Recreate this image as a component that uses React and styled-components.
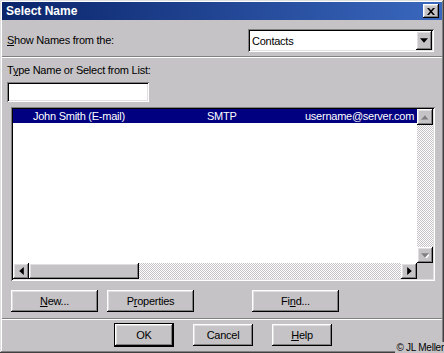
import React from 'react';
import styled, { createGlobalStyle, css } from 'styled-components';

const FACE = '#c6c3c6';

const Global = createGlobalStyle`
  html, body {
    margin: 0;
    padding: 0;
    background: ${FACE};
  }
  body {
    font-family: "Liberation Sans", Arial, sans-serif;
    font-size: 11px;
    letter-spacing: -0.25px;
    color: #000;
  }
`;

const raised = css`
  background: ${FACE};
  box-shadow: inset -1px -1px #000, inset 1px 1px #fff,
    inset -2px -2px #808080, inset 2px 2px #dfdfdf;
`;

const sunken = css`
  background: #fff;
  box-shadow: inset 1px 1px #808080, inset -1px -1px #fff,
    inset 2px 2px #000, inset -2px -2px #dfdfdf;
`;

const checker = css`
  background: repeating-conic-gradient(#fff 0 25%, ${FACE} 0 50%) 0 0 / 2px 2px;
`;

const Window = styled.div`
  position: relative;
  width: 444px;
  height: 353px;
  box-sizing: border-box;
  padding: 2px;
  background: ${FACE};
  box-shadow: inset -1px -1px #404040, inset 1px 1px #dfdfdf,
    inset -2px -2px #808080, inset 2px 2px #fff;
  display: flex;
  flex-direction: column;
  overflow: hidden;
`;

const TitleBar = styled.div`
  height: 18px;
  display: flex;
  align-items: center;
  justify-content: space-between;
  padding: 0 3px 0 4px;
  background: linear-gradient(to right, #0a246a, #3a68be);
  color: #fff;
  font-weight: bold;
  font-size: 12px;
  letter-spacing: 0;
`;

const CloseButton = styled.div`
  ${raised};
  width: 16px;
  height: 14px;
  display: flex;
  align-items: center;
  justify-content: center;
`;

const TopRow = styled.div`
  display: flex;
  align-items: center;
  justify-content: space-between;
  margin-top: 9px;
  padding: 0 8px 0 5px;
`;

const Label = styled.div`
  line-height: 13px;
  padding-left: ${p => p.$indent || 0}px;
  margin-top: ${p => p.$top || 0}px;
`;

const Combo = styled.div`
  ${sunken};
  width: 186px;
  height: 23px;
  box-sizing: border-box;
  padding: 2px;
  display: flex;
  align-items: center;
`;

const ComboText = styled.div`
  flex: 1;
  padding-left: 2px;
`;

const ArrowButton = styled.div`
  ${raised};
  width: ${p => p.$w || 16}px;
  height: ${p => p.$h || 16}px;
  flex: none;
  display: flex;
  align-items: center;
  justify-content: center;
`;

const Separator = styled.div`
  height: 0;
  border-top: 1px solid #808080;
  border-bottom: 1px solid #fff;
  margin-top: ${p => p.$top}px;
`;

const TextInput = styled.div`
  ${sunken};
  width: 142px;
  height: 20px;
  margin: 5px 0 0 5px;
`;

const ListBox = styled.div`
  ${sunken};
  width: 424px;
  height: 174px;
  box-sizing: border-box;
  padding: 2px;
  margin: 5px 0 0 9px;
  display: grid;
  grid-template-columns: 1fr 16px;
  grid-template-rows: 1fr 16px;
`;

const ListContent = styled.div`
  background: #fff;
  overflow: hidden;
`;

const ListRow = styled.div`
  display: grid;
  grid-template-columns: 174px 98px 1fr;
  height: 14px;
  line-height: 14px;
  padding: 0 3px 0 20px;
  background: ${p => (p.$selected ? '#000080' : 'transparent')};
  color: ${p => (p.$selected ? '#fff' : '#000')};
  white-space: nowrap;
`;

const Cell = styled.span`
  text-align: ${p => p.$align || 'left'};
`;

const VScroll = styled.div`
  ${checker};
  display: flex;
  flex-direction: column;
  justify-content: space-between;
`;

const HScroll = styled.div`
  ${checker};
  display: flex;
  align-items: stretch;
`;

const Thumb = styled.div`
  ${raised};
  width: 110px;
`;

const Spacer = styled.div`
  flex: 1;
`;

const Corner = styled.div`
  background: ${FACE};
`;

const ButtonRow = styled.div`
  display: flex;
  align-items: center;
  margin-top: ${p => p.$top}px;
  padding-left: ${p => p.$left}px;
`;

const Button = styled.div`
  ${raised};
  width: ${p => p.$w}px;
  height: 22px;
  margin-left: ${p => p.$gap || 0}px;
  display: flex;
  align-items: center;
  justify-content: center;
  line-height: 13px;
  ${p => p.$default && css`
    width: 58px;
    box-shadow: 0 0 0 1px #000, inset -1px -1px #000, inset 1px 1px #fff,
      inset -2px -2px #808080, inset 2px 2px #dfdfdf;
    margin-left: 1px;
    margin-right: 1px;
  `}
`;

const Copyright = styled.div`
  position: absolute;
  right: 0;
  bottom: 0;
  font-size: 10px;
  line-height: 11px;
  padding-left: 1px;
  background: ${FACE};
`;

const Tri = ({ dir, disabled }) => {
  const pts = {
    down: '0,0 7,0 3.5,4',
    up: '0,4 7,4 3.5,0',
    left: '4,0 4,7 0,3.5',
    right: '0,0 0,7 4,3.5',
  }[dir];
  const vertical = dir === 'up' || dir === 'down';
  return (
    <svg width={vertical ? 8 : 5} height={vertical ? 5 : 8} viewBox={vertical ? '0 0 7 4' : '0 0 4 7'}>
      {disabled && (
        <polygon points={pts} fill="#fff" transform="translate(1,1)" />
      )}
      <polygon points={pts} fill={disabled ? '#808080' : '#000'} />
    </svg>
  );
};

const U = styled.span`
  text-decoration: underline;
`;

export default function App() {
  return (
    <>
      <Global />
      <Window>
        <TitleBar>
          <span>Select Name</span>
          <CloseButton>
            <svg width="8" height="7" viewBox="0 0 8 7">
              <path d="M0 0h2l2 2.2L6 0h2L5 3.5 8 7H6L4 4.8 2 7H0l3-3.5z" fill="#000" />
            </svg>
          </CloseButton>
        </TitleBar>

        <TopRow>
          <Label>
            <U>S</U>how Names from the:
          </Label>
          <Combo>
            <ComboText>Contacts</ComboText>
            <ArrowButton $h={19}>
              <Tri dir="down" />
            </ArrowButton>
          </Combo>
        </TopRow>

        <Separator $top={4} />

        <Label $indent={5} $top={6}>
          T<U>y</U>pe Name or Select from List:
        </Label>
        <TextInput />

        <ListBox>
          <ListContent>
            <ListRow $selected>
              <Cell>John Smith (E-mail)</Cell>
              <Cell>SMTP</Cell>
              <Cell $align="right">username@server.com</Cell>
            </ListRow>
          </ListContent>
          <VScroll>
            <ArrowButton>
              <Tri dir="up" disabled />
            </ArrowButton>
            <ArrowButton>
              <Tri dir="down" disabled />
            </ArrowButton>
          </VScroll>
          <HScroll>
            <ArrowButton>
              <Tri dir="left" />
            </ArrowButton>
            <Thumb />
            <Spacer />
            <ArrowButton>
              <Tri dir="right" />
            </ArrowButton>
          </HScroll>
          <Corner />
        </ListBox>

        <ButtonRow $top={9} $left={9}>
          <Button $w={87}>
            <span><U>N</U>ew...</span>
          </Button>
          <Button $w={87} $gap={9}>
            <span>P<U>r</U>operties</span>
          </Button>
          <Button $w={87} $gap={58}>
            <span>Fi<U>n</U>d...</span>
          </Button>
        </ButtonRow>

        <Separator $top={6} />

        <ButtonRow $top={4} $left={112}>
          <Button $w={58} $default>
            <span>OK</span>
          </Button>
          <Button $w={60} $gap={19}>
            <span>Cancel</span>
          </Button>
          <Button $w={60} $gap={19}>
            <span><U>H</U>elp</span>
          </Button>
        </ButtonRow>

        <Copyright>© JL Meller</Copyright>
      </Window>
    </>
  );
}
